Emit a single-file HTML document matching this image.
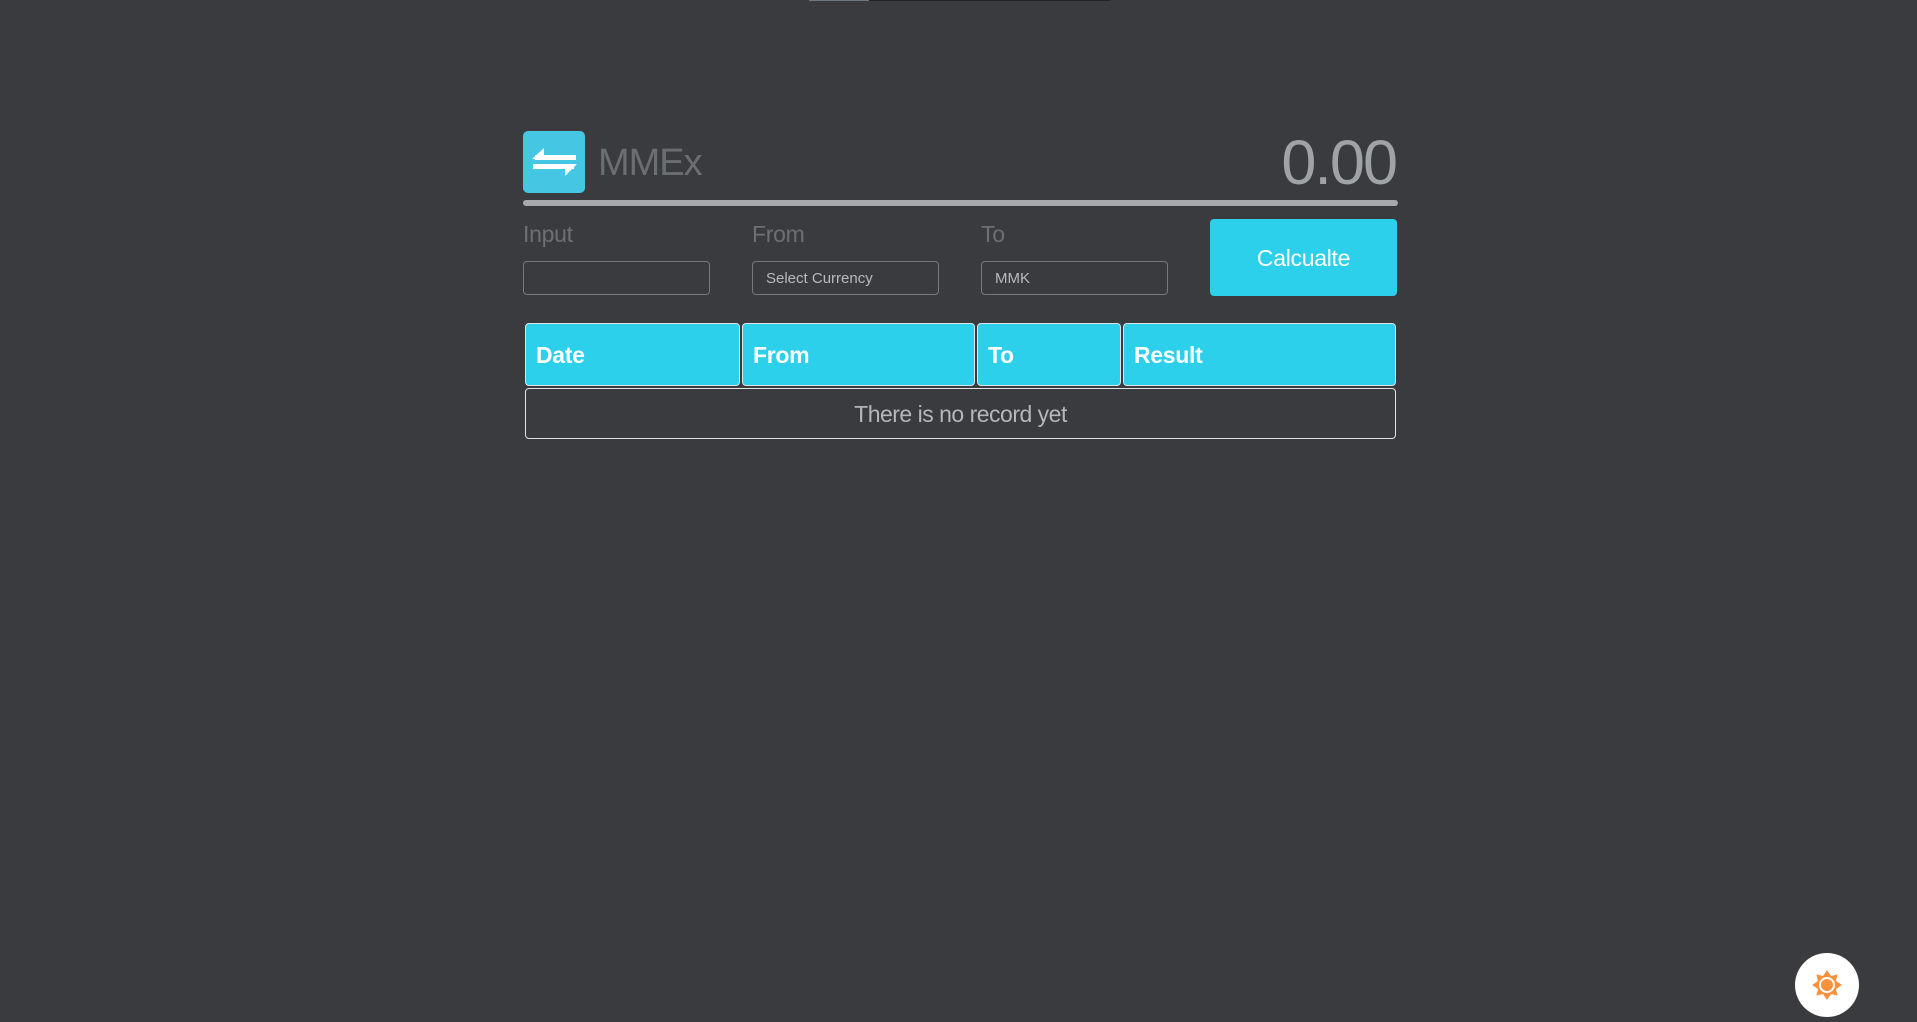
<!DOCTYPE html>
<html><head><meta charset="utf-8"><style>
html,body{margin:0;padding:0;width:1917px;height:1022px;background:#3a3b3e;overflow:hidden;font-family:"Liberation Sans",sans-serif;position:relative}
.a{position:absolute}
.inp{position:absolute;top:261px;height:34px;width:187px;border:1px solid #77797c;border-radius:4px;box-sizing:border-box;color:#b8babd;font-size:15px;line-height:34px;padding-left:13px}
.lbl{position:absolute;top:221px;color:#6d7073;font-size:23px;letter-spacing:-0.3px}
.th{position:absolute;top:323px;height:63px;background:#2dd0eb;border:1px solid #dfe3e5;border-radius:4px;box-sizing:border-box;color:#fff;font-weight:bold;font-size:23px;line-height:63px;padding-left:10px;letter-spacing:-0.3px}
</style></head><body>
<div class="a" style="left:809px;top:0;width:60px;height:1px;background:#6b7a80"></div>
<div class="a" style="left:869px;top:0;width:241px;height:1px;background:#222"></div>

<div class="a" style="left:523px;top:131px;width:62px;height:62px;background:#45c6e3;border-radius:5px">
<svg width="62" height="62" viewBox="0 0 62 62"><g fill="#fff">
<rect x="12" y="24" width="41" height="5"/><polygon points="9,28 21,17 21,29"/>
<rect x="10" y="33" width="41" height="5"/><polygon points="54,33 42,33 42,45"/>
</g></svg></div>
<div class="a" style="left:598px;top:139px;color:#6b6e71;font-size:38px;line-height:48px;letter-spacing:-1px">MMEx</div>
<div class="a" style="right:521px;top:127px;color:#a0a3a6;font-size:63px;line-height:72px;letter-spacing:-2px">0.00</div>
<div class="a" style="left:523px;top:200px;width:875px;height:6px;background:#a6a8ab;border-radius:3px"></div>

<div class="lbl" style="left:523px">Input</div>
<div class="lbl" style="left:752px">From</div>
<div class="lbl" style="left:981px">To</div>
<div class="inp" style="left:523px"></div>
<div class="inp" style="left:752px">Select Currency</div>
<div class="inp" style="left:981px">MMK</div>
<div class="a" style="left:1210px;top:219px;width:187px;height:77px;background:#2dd0eb;border-radius:4px;color:#fff;font-size:23px;line-height:79px;text-align:center;letter-spacing:-0.3px">Calcualte</div>

<div class="th" style="left:525px;width:215px">Date</div>
<div class="th" style="left:742px;width:233px">From</div>
<div class="th" style="left:977px;width:144px">To</div>
<div class="th" style="left:1123px;width:273px">Result</div>
<div class="a" style="left:525px;top:388px;width:871px;height:51px;border:1px solid #dfe3e5;border-radius:4px;box-sizing:border-box;color:#b4b6b9;font-size:23px;line-height:51px;text-align:center;letter-spacing:-0.5px">There is no record yet</div>

<div class="a" style="left:1795px;top:953px;width:64px;height:64px;background:#fff;border-radius:50%">
<svg width="64" height="64" viewBox="0 0 64 64"><g fill="#f7913d" transform="translate(32,32)">
<polygon points="0,-15 4,-9 10.6,-10.6 9,-4 15,0 9,4 10.6,10.6 4,9 0,15 -4,9 -10.6,10.6 -9,4 -15,0 -9,-4 -10.6,-10.6 -4,-9"/>
<circle r="8" fill="#fff"/><circle r="6"/></g></svg></div>
</body></html>
